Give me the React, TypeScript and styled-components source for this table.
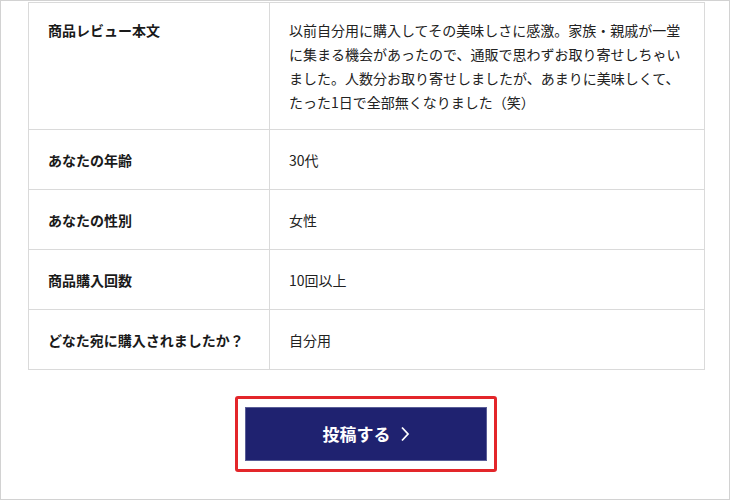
import React from "react";
import styled, { createGlobalStyle } from "styled-components";

const rows = [
  {
    label: "商品レビュー本文",
    value:
      "以前自分用に購入してその美味しさに感激。家族・親戚が一堂に集まる機会があったので、通販で思わずお取り寄せしちゃいました。人数分お取り寄せしましたが、あまりに美味しくて、たった1日で全部無くなりました（笑）",
  },
  { label: "あなたの年齢", value: "30代" },
  { label: "あなたの性別", value: "女性" },
  { label: "商品購入回数", value: "10回以上" },
  { label: "どなた宛に購入されましたか？", value: "自分用" },
];

const App: React.FC = () => {
  return (
    <>
      <GlobalStyle />
      <Frame>
        <ConfirmTable>
          <tbody>
            {rows.map((row, i) => (
              <Row key={i} $tall={i === 0}>
                <LabelCell $top={i === 0}>{row.label}</LabelCell>
                <ValueCell $top={i === 0}>{row.value}</ValueCell>
              </Row>
            ))}
          </tbody>
        </ConfirmTable>

        <ButtonArea>
          <Highlight>
            <SubmitButton type="button">
              投稿する
              <Chevron viewBox="0 0 10 16" aria-hidden="true">
                <path d="M2 1.5 L8 8 L2 14.5" />
              </Chevron>
            </SubmitButton>
          </Highlight>
        </ButtonArea>
      </Frame>
    </>
  );
};

export default App;

// Styled Components

const GlobalStyle = createGlobalStyle`
  html, body {
    margin: 0;
    padding: 0;
    background: #ffffff;
  }
  body {
    font-family: "Noto Sans CJK JP", "Noto Sans", sans-serif;
    color: #222222;
  }
`;

const Frame = styled.div`
  box-sizing: border-box;
  width: 730px;
  height: 500px;
  border: 1px solid #d2d2d2;
  padding: 0 25px 0 27px;
  overflow: hidden;
`;

const ConfirmTable = styled.table`
  width: 677px;
  border-collapse: collapse;
  table-layout: fixed;
  margin-top: 1px;
`;

const Row = styled.tr<{ $tall: boolean }>`
  height: ${(p) => (p.$tall ? "127px" : "60px")};
`;

const LabelCell = styled.th<{ $top: boolean }>`
  width: 202px;
  border: 1px solid #dadada;
  padding: ${(p) => (p.$top ? "15px 19px 12px" : "0 19px")};
  vertical-align: ${(p) => (p.$top ? "top" : "middle")};
  text-align: left;
  font-size: 14px;
  font-weight: 700;
  line-height: 24px;
  color: #1a1a1a;
`;

const ValueCell = styled.td<{ $top: boolean }>`
  border: 1px solid #dadada;
  padding: ${(p) => (p.$top ? "15px 19px 12px" : "0 19px")};
  vertical-align: ${(p) => (p.$top ? "top" : "middle")};
  font-size: 14px;
  line-height: 24px;
  color: #222222;
`;

const ButtonArea = styled.div`
  display: flex;
  justify-content: center;
  padding-top: 26px;
`;

const Highlight = styled.div`
  box-sizing: border-box;
  width: 262px;
  height: 76px;
  border: 3px solid #e3262a;
  border-radius: 3px;
  display: flex;
  align-items: center;
  justify-content: center;
`;

const SubmitButton = styled.button`
  box-sizing: border-box;
  width: 242px;
  height: 54px;
  margin-top: -1px;
  background: #1f2270;
  border: 1px solid #5a5d97;
  color: #ffffff;
  font-family: "Noto Sans CJK JP", "Noto Sans", sans-serif;
  font-size: 17px;
  font-weight: 700;
  display: flex;
  align-items: center;
  justify-content: center;
  gap: 9px;
  cursor: pointer;
`;

const Chevron = styled.svg`
  width: 10px;
  height: 16px;
  fill: none;
  stroke: #ffffff;
  stroke-width: 1.8;
`;
